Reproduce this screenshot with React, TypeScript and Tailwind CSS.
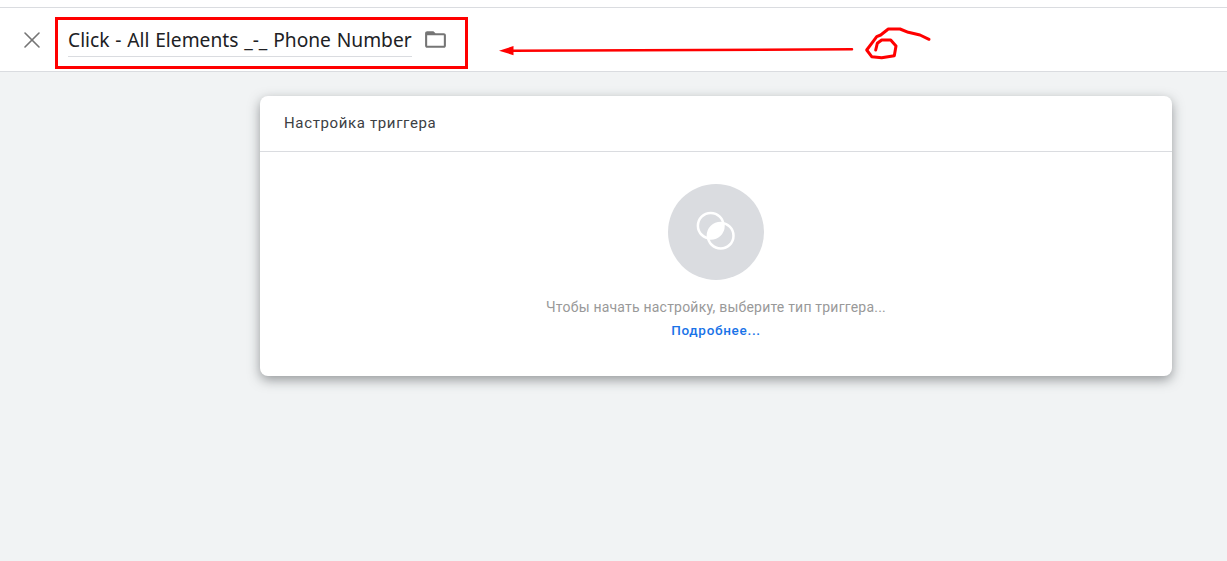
import { X } from "lucide-react";

function FolderIcon() {
  return (
    <svg width="25" height="25" viewBox="0 0 24 24" fill="none" className="text-[#757575]">
      <path
        d="M20 6h-8l-2-2H4c-1.1 0-2 .9-2 2v12c0 1.1.9 2 2 2h16c1.1 0 2-.9 2-2V8c0-1.100-.9-2-2-2zm0 12H4V8h16v10z"
        fill="currentColor"
      />
    </svg>
  );
}

function TriggerIcon() {
  return (
    <svg width="96" height="96" viewBox="0 0 96 96" fill="none">
      <defs>
        <clipPath id="overlap">
          <circle cx="42.700" cy="41.700" r="12.800" />
        </clipPath>
      </defs>
      <circle cx="48" cy="48" r="48" fill="#dadce0" />
      <circle cx="52.700" cy="51.700" r="12.800" fill="white" clipPath="url(#overlap)" />
      <circle cx="42.700" cy="41.700" r="12.800" stroke="white" strokeWidth="2.500" />
      <circle cx="52.700" cy="51.700" r="12.800" stroke="white" strokeWidth="2.500" />
    </svg>
  );
}

// the hand-drawn arrow and scribble, in page coordinates
function Annotations() {
  return (
    <svg width="440" height="60" viewBox="495 15 440 60" fill="none" className="absolute left-[495px] top-[15px]">
      <path d="M512 50.700L852 49.300" stroke="#ff0000" strokeWidth="2.500" strokeLinecap="round" />
      <path d="M499 50.700L513.500 46V55.200z" fill="#ff0000" />
      <path
        d="M875.700 50L877.300 43.300L881.700 40L890.700 40L896 46L894.300 55.700L881.700 57.700L871.700 56.700L866.700 50L871.700 43.300L876.700 36.700L880.700 35L888.300 29L900 29L908.300 32.300L920 35L929 39.300"
        stroke="#ff0000"
        strokeWidth="3"
        strokeLinecap="round"
        strokeLinejoin="round"
      />
    </svg>
  );
}

export default function App() {
  return (
    <div className="relative flex h-screen flex-col overflow-hidden bg-[#f1f3f4] font-['Roboto',sans-serif]">
      <div className="h-2 border-b border-[#dadce0] bg-white" />
      <header className="flex h-16 shrink-0 items-center border-b border-[#dadce0] bg-white pl-[18px]">
        <X className="h-7 w-7 text-[#757575]" strokeWidth={1.4} />
        <div className="ml-[22px] flex h-[34px] w-[344px] items-center border-b border-[#dadce0] pt-[3px] font-['Noto_Sans',sans-serif] text-[19.200px] [word-spacing:0.800px] whitespace-nowrap text-[#202124]">
          Click - All Elements _-_ Phone Number
        </div>
        <div className="ml-[11px] flex">
          <FolderIcon />
        </div>
      </header>

      <main className="pr-[55px] pl-[260px] pt-6">
        <section className="h-[280px] rounded-lg bg-white shadow-[0_4px_12px_rgba(60,64,67,0.5)]">
          <div className="flex h-[56px] items-center border-b border-[#dadce0] px-6 text-[15px] tracking-[0.640px] text-[#3c4043]">
            Настройка триггера
          </div>
          <div className="flex flex-col items-center pt-8">
            <TriggerIcon />
            <p className="mt-[17px] text-[14px] leading-5 tracking-[0.210px] text-[#999999]">
              Чтобы начать настройку, выберите тип триггера...
            </p>
            <a className="mt-[3px] text-[13.500px] leading-5 font-medium tracking-[0.700px] text-[#1a73e8]">Подробнее...</a>
          </div>
        </section>
      </main>

      <div className="absolute top-[17px] left-[55px] h-[52px] w-[413px] border-[3px] border-[#ff0000]" />
      <Annotations />
    </div>
  );
}
